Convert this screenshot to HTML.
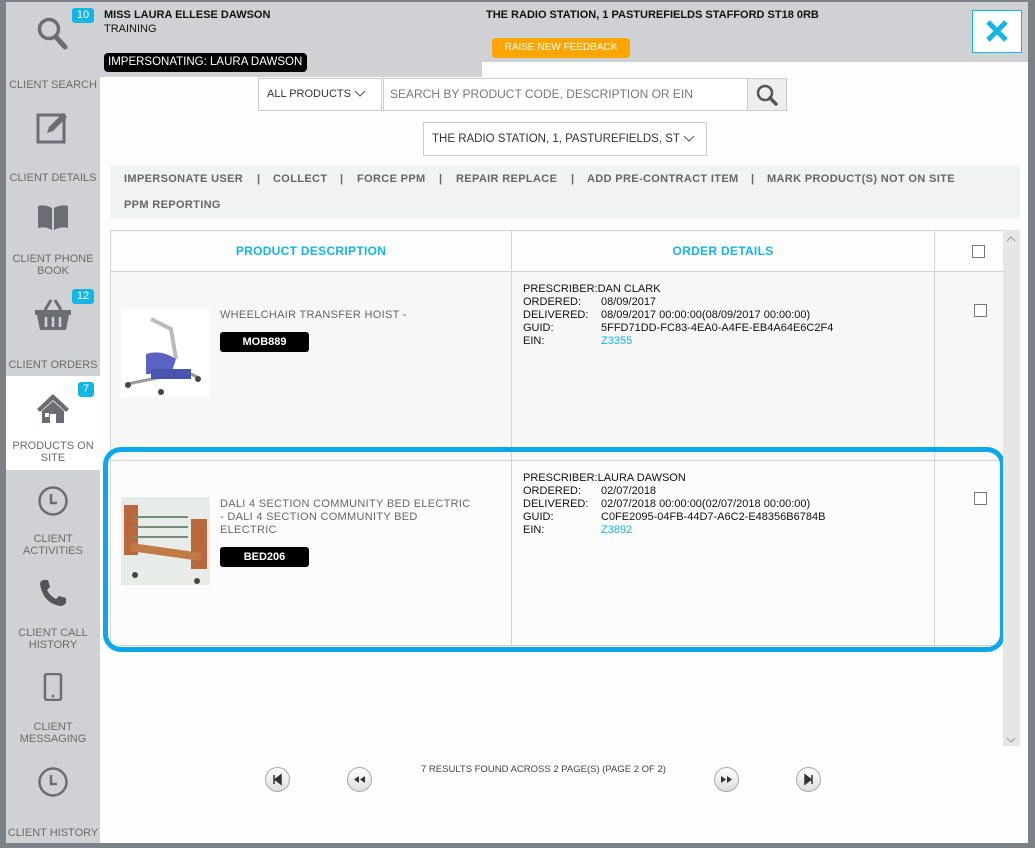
<!DOCTYPE html>
<html><head><meta charset="utf-8"><style>
*{box-sizing:border-box;margin:0;padding:0}
body{width:1035px;height:848px;overflow:hidden;background:#7b8186;font-family:"Liberation Sans",Arial,sans-serif;position:relative}
.abs{position:absolute}
#frame{left:6px;top:2px;width:1022px;height:841px;background:#fdfdfd}
#side{left:6px;top:2px;width:94px;height:841px;background:#d0d1d5}
#hdr{left:100px;top:2px;width:928px;height:60px;background:#d0d1d5}
#hdr2{left:100px;top:62px;width:382px;height:15px;background:#d0d1d5}
.nav{position:absolute;left:6px;width:94px;text-align:center;color:#6b6b6b;font-size:11px;line-height:12px}
.nav svg{display:block;margin:0 auto}
.badge{position:absolute;background:#13b5e5;color:#fff;font-size:11px;border-radius:3px;text-align:center;line-height:15px;height:15px}
.b{font-weight:bold;font-size:11px;color:#111}
.sel{border:1px solid #ccc;background:#fff;font-size:12px;color:#333}
.tb{position:absolute;font-size:11px;font-weight:bold;color:#666;letter-spacing:0.35px}
.cell{position:absolute;border:1px solid #d3d3d3}
.od{font-size:11px;color:#111;line-height:13px}
.od span{display:inline-block;width:78px}
.code{position:absolute;background:#000;color:#fff;font-size:11px;font-weight:bold;width:89px;height:20px;line-height:20px;text-align:center;border-radius:3px}
.desc{position:absolute;color:#666;font-size:11px;line-height:13px;letter-spacing:0.3px}
.cb{position:absolute;width:13px;height:13px;border:1px solid #777;background:#fff}
.pg{position:absolute;top:767px;width:25px;height:25px;border-radius:50%;border:1px solid #aaa;background:linear-gradient(#fff,#ddd)}
.chev{display:inline-block;vertical-align:middle;margin-left:3px}
</style></head><body>
<div id="frame" class="abs"></div>
<div id="side" class="abs"></div>
<div id="hdr" class="abs"></div>
<div id="hdr2" class="abs"></div>

<!-- sidebar -->
<div class="nav" style="top:16px"><svg width="34" height="36" viewBox="0 0 34 36"><circle cx="13" cy="13" r="9.5" fill="none" stroke="#6a6d73" stroke-width="3.5"/><path d="M20 21l9 10" stroke="#6a6d73" stroke-width="5" stroke-linecap="round"/></svg></div>
<div class="badge" style="left:72px;top:8px;width:22px">10</div>
<div class="nav" style="top:79px">CLIENT SEARCH</div>
<div class="nav" style="top:111px"><svg width="34" height="34" viewBox="0 0 34 34"><rect x="2" y="4" width="26" height="27" fill="none" stroke="#6a6d73" stroke-width="3"/><path d="M11 22l2-6 14-14 4 4-14 14z" fill="#6a6d73"/></svg></div>
<div class="nav" style="top:172px">CLIENT DETAILS</div>
<div class="nav" style="top:204px"><svg width="34" height="28" viewBox="0 0 34 28"><path d="M2 2q7-2 14 2v22q-7-4-14-2z M18 4q7-4 14-2v22q-7-2-14 2z" fill="#6a6d73"/></svg></div>
<div class="nav" style="top:253px">CLIENT PHONE<br>BOOK</div>
<div class="nav" style="top:298px"><svg width="40" height="34" viewBox="0 0 40 34"><path d="M12 12l6-10M28 12l-6-10" stroke="#6a6d73" stroke-width="3"/><path d="M2 12h36v5h-2l-3 15H7L4 17H2z" fill="#6a6d73"/><path d="M13 19v10M20 19v10M27 19v10" stroke="#d0d1d5" stroke-width="2.5"/></svg></div>
<div class="badge" style="left:72px;top:289px;width:22px">12</div>
<div class="nav" style="top:359px">CLIENT ORDERS</div>
<div class="abs" style="left:6px;top:376px;width:94px;height:94px;background:#fff"></div>
<div class="nav" style="top:392px"><svg width="34" height="32" viewBox="0 0 34 32"><path d="M17 2L1 17l3 3 13-12 13 12 3-3z" fill="#6a6d73"/><path d="M6 19l11-10 11 10v12h-8v-9h-6v9H6z" fill="#6a6d73"/><rect x="9" y="21" width="4" height="4" fill="#fff"/></svg></div>
<div class="badge" style="left:78px;top:382px;width:16px">7</div>
<div class="nav" style="top:440px">PRODUCTS ON<br>SITE</div>
<div class="nav" style="top:485px"><svg width="32" height="32" viewBox="0 0 32 32"><circle cx="16" cy="16" r="13.5" fill="none" stroke="#6a6d73" stroke-width="2.5"/><path d="M14 9v9h6" fill="none" stroke="#6a6d73" stroke-width="2.5"/></svg></div>
<div class="nav" style="top:533px">CLIENT<br>ACTIVITIES</div>
<div class="nav" style="top:578px"><svg width="30" height="30" viewBox="0 0 30 30"><path d="M5 2l5 0 2 7-3 3q3 6 9 9l3-3 7 2v5q-2 3-6 3Q5 25 2 6q0-3 3-4z" fill="#555"/></svg></div>
<div class="nav" style="top:627px">CLIENT CALL<br>HISTORY</div>
<div class="nav" style="top:673px"><svg width="20" height="28" viewBox="0 0 20 28"><rect x="2" y="1" width="16" height="26" rx="2" fill="none" stroke="#6a6d73" stroke-width="2.5"/><circle cx="10" cy="23" r="1.3" fill="#6a6d73"/></svg></div>
<div class="nav" style="top:721px">CLIENT<br>MESSAGING</div>
<div class="nav" style="top:766px"><svg width="32" height="32" viewBox="0 0 32 32"><circle cx="16" cy="16" r="13.5" fill="none" stroke="#6a6d73" stroke-width="2.5"/><path d="M14 9v9h6" fill="none" stroke="#6a6d73" stroke-width="2.5"/></svg></div>
<div class="nav" style="top:827px">CLIENT HISTORY</div>

<!-- header -->
<div class="abs b" style="left:104px;top:9px">MISS LAURA ELLESE DAWSON</div>
<div class="abs" style="left:104px;top:23px;font-size:11px;color:#111">TRAINING</div>
<div class="abs" style="left:104px;top:53px;width:203px;height:19px;background:#000;color:#fff;font-size:11.5px;line-height:19px;padding-left:4px;border-radius:4px;white-space:nowrap;overflow:hidden">IMPERSONATING: LAURA DAWSON</div>
<div class="abs b" style="left:486px;top:9px">THE RADIO STATION, 1 PASTUREFIELDS STAFFORD ST18 0RB</div>
<div class="abs" style="left:492px;top:38px;width:138px;height:20px;background:#ffa500;color:#fff;font-size:10px;line-height:20px;text-align:center;border-radius:4px">RAISE NEW FEEDBACK</div>
<div class="abs" style="left:972px;top:10px;width:50px;height:43px;background:#fff;border:1px solid #13b5e5"><svg width="48" height="41" viewBox="0 0 48 41"><path d="M15 11l18 18M33 11L15 29" stroke="#13b5e5" stroke-width="5"/></svg></div>

<!-- search -->
<div class="abs sel" style="left:258px;top:78px;width:124px;height:33px;line-height:31px;padding-left:8px;font-size:11px">ALL PRODUCTS<svg class="chev" width="12" height="8" viewBox="0 0 12 8"><path d="M1 1l5 5 5-5" fill="none" stroke="#555"/></svg></div>
<div class="abs sel" style="left:383px;top:78px;width:365px;height:33px;line-height:31px;padding-left:6px;color:#777">SEARCH BY PRODUCT CODE, DESCRIPTION OR EIN</div>
<div class="abs" style="left:747px;top:78px;width:40px;height:33px;background:#eee;border:1px solid #ccc"><svg width="38" height="31" viewBox="0 0 38 31"><circle cx="17" cy="14" r="7" fill="none" stroke="#555" stroke-width="2.5"/><path d="M22 19l6 6" stroke="#555" stroke-width="3.5" stroke-linecap="round"/></svg></div>
<div class="abs sel" style="left:423px;top:122px;width:284px;height:34px;line-height:32px;padding-left:8px;font-size:11.5px">THE RADIO STATION, 1, PASTUREFIELDS, ST<svg class="chev" width="12" height="8" viewBox="0 0 12 8"><path d="M1 1l5 5 5-5" fill="none" stroke="#555"/></svg></div>

<!-- toolbar -->
<div class="abs" style="left:110px;top:166px;width:910px;height:52px;background:#f1f2f2"></div>
<div class="tb" style="left:124px;top:173px">IMPERSONATE USER</div>
<div class="tb" style="left:257px;top:173px">|</div>
<div class="tb" style="left:273px;top:173px">COLLECT</div>
<div class="tb" style="left:340px;top:173px">|</div>
<div class="tb" style="left:357px;top:173px">FORCE PPM</div>
<div class="tb" style="left:439px;top:173px">|</div>
<div class="tb" style="left:456px;top:173px">REPAIR REPLACE</div>
<div class="tb" style="left:571px;top:173px">|</div>
<div class="tb" style="left:587px;top:173px">ADD PRE-CONTRACT ITEM</div>
<div class="tb" style="left:751px;top:173px">|</div>
<div class="tb" style="left:767px;top:173px">MARK PRODUCT(S) NOT ON SITE</div>
<div class="tb" style="left:124px;top:199px">PPM REPORTING</div>

<!-- table -->
<div class="cell" style="left:110px;top:230px;width:402px;height:42px;background:#fdfdfd"></div>
<div class="cell" style="left:511px;top:230px;width:424px;height:42px;background:#fdfdfd"></div>
<div class="cell" style="left:934px;top:230px;width:70px;height:42px;background:#fdfdfd"></div>
<div class="abs" style="left:110px;top:244px;width:402px;text-align:center;color:#13b5e5;font-weight:bold;font-size:12px;letter-spacing:0.3px">PRODUCT DESCRIPTION</div>
<div class="abs" style="left:511px;top:244px;width:424px;text-align:center;color:#13b5e5;font-weight:bold;font-size:12px;letter-spacing:0.3px">ORDER DETAILS</div>
<div class="cb" style="left:972px;top:245px"></div>

<div class="cell" style="left:110px;top:271px;width:402px;height:190px;background:#f7f7f7"></div>
<div class="cell" style="left:511px;top:271px;width:424px;height:190px;background:#f7f7f7"></div>
<div class="cell" style="left:934px;top:271px;width:70px;height:190px;background:#f7f7f7"></div>
<div class="cell" style="left:110px;top:460px;width:402px;height:186px;background:#fcfcfc"></div>
<div class="cell" style="left:511px;top:460px;width:424px;height:186px;background:#fcfcfc"></div>
<div class="cell" style="left:934px;top:460px;width:70px;height:186px;background:#fcfcfc"></div>

<!-- row1 -->
<div class="abs" style="left:121px;top:309px;width:89px;height:88px;background:#fff"><svg width="89" height="88" viewBox="0 0 89 88"><path d="M30 10l20 10 5 30" stroke="#bbb" stroke-width="4" fill="none"/><path d="M25 45q15-5 30 5l-5 15H25z" fill="#5a63c2"/><path d="M6 75l60-12 12 6" stroke="#999" stroke-width="3" fill="none"/><rect x="30" y="60" width="40" height="10" fill="#4a55b0"/><circle cx="7" cy="76" r="3" fill="#444"/><circle cx="40" cy="83" r="3" fill="#444"/><circle cx="77" cy="70" r="3" fill="#444"/></svg></div>
<div class="desc" style="left:220px;top:309px">WHEELCHAIR TRANSFER HOIST -</div>
<div class="code" style="left:220px;top:332px">MOB889</div>
<div class="abs od" style="left:523px;top:283px"><div>PRESCRIBER:DAN CLARK</div><div><span>ORDERED:</span>08/09/2017</div><div><span>DELIVERED:</span>08/09/2017 00:00:00(08/09/2017 00:00:00)</div><div><span>GUID:</span>5FFD71DD-FC83-4EA0-A4FE-EB4A64E6C2F4</div><div><span>EIN:</span><b style="color:#13b5e5;font-weight:normal">Z3355</b></div></div>
<div class="cb" style="left:974px;top:304px"></div>

<!-- row2 -->
<div class="abs" style="left:121px;top:497px;width:89px;height:88px;background:#e8ece8"><svg width="89" height="88" viewBox="0 0 89 88"><rect x="3" y="8" width="14" height="50" fill="#b8683a"/><rect x="70" y="22" width="16" height="50" fill="#b8683a"/><path d="M10 50l70 10" stroke="#c07a45" stroke-width="8"/><path d="M12 20h55M12 30h55M12 40h55" stroke="#7a8a7a" stroke-width="2"/><circle cx="14" cy="78" r="3" fill="#444"/><circle cx="76" cy="84" r="3" fill="#444"/></svg></div>
<div class="desc" style="left:220px;top:498px">DALI 4 SECTION COMMUNITY BED ELECTRIC<br>- DALI 4 SECTION COMMUNITY BED<br>ELECTRIC</div>
<div class="code" style="left:220px;top:547px">BED206</div>
<div class="abs od" style="left:523px;top:472px"><div>PRESCRIBER:LAURA DAWSON</div><div><span>ORDERED:</span>02/07/2018</div><div><span>DELIVERED:</span>02/07/2018 00:00:00(02/07/2018 00:00:00)</div><div><span>GUID:</span>C0FE2095-04FB-44D7-A6C2-E48356B6784B</div><div><span>EIN:</span><b style="color:#13b5e5;font-weight:normal">Z3892</b></div></div>
<div class="cb" style="left:974px;top:492px"></div>

<div class="abs" style="left:103px;top:447px;width:902px;height:205px;border:5px solid #0aa8ea;border-radius:18px"></div>

<!-- scrollbar -->
<div class="abs" style="left:1003px;top:230px;width:17px;height:516px;background:#e6e6e6"></div>
<svg class="abs" style="left:1006px;top:236px" width="10" height="6" viewBox="0 0 10 6"><path d="M1 5l4-4 4 4" fill="none" stroke="#999"/></svg>
<svg class="abs" style="left:1006px;top:737px" width="10" height="6" viewBox="0 0 10 6"><path d="M1 1l4 4 4-4" fill="none" stroke="#999"/></svg>

<!-- pager -->
<div class="pg" style="left:265px"><svg width="23" height="23" viewBox="0 0 23 23"><path d="M8 7v9M15 7l-6 4.5 6 4.5z" stroke="#333" fill="#333" stroke-width="1.5"/></svg></div>
<div class="pg" style="left:347px"><svg width="23" height="23" viewBox="0 0 23 23"><path d="M11 8l-5 3.5 5 3.5zM17 8l-5 3.5 5 3.5z" fill="#333"/></svg></div>
<div class="abs" style="left:421px;top:764px;font-size:9.5px;color:#444">7 RESULTS FOUND ACROSS 2 PAGE(S) (PAGE 2 OF 2)</div>
<div class="pg" style="left:714px"><svg width="23" height="23" viewBox="0 0 23 23"><path d="M6 8l5 3.5-5 3.5zM12 8l5 3.5-5 3.5z" fill="#333"/></svg></div>
<div class="pg" style="left:796px"><svg width="23" height="23" viewBox="0 0 23 23"><path d="M15 7v9M8 7l6 4.5-6 4.5z" stroke="#333" fill="#333" stroke-width="1.5"/></svg></div>
</body></html>
